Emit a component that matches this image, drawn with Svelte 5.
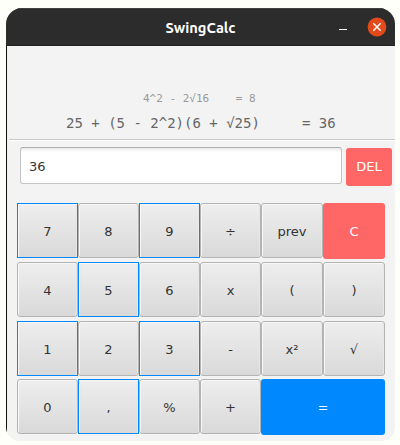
<script>
  const keys = [
    { t: '7', f: true }, { t: '8' }, { t: '9', f: true }, { t: '÷' }, { t: 'prev' }, { t: 'C', k: 'red' },
    { t: '4' }, { t: '5', f: true }, { t: '6' }, { t: 'x' }, { t: '(' }, { t: ')' },
    { t: '1', f: true }, { t: '2' }, { t: '3', f: true }, { t: '-' }, { t: 'x²' }, { t: '√' },
    { t: '0' }, { t: ',', f: true }, { t: '%' }, { t: '+' }, { t: '=', k: 'blue' }
  ];
</script>

<main>
  <div class="window">
    <header>
      <span class="side"></span>
      <h1>SwingCalc</h1>
      <div class="side controls">
        <i class="min"></i>
        <svg width="20" height="20" viewBox="0 0 20 20">
          <circle cx="10" cy="10" r="9.4" fill="#e2491b" />
          <path d="M6.3 6.3L13.7 13.7M13.7 6.3L6.3 13.7" stroke="#fff" stroke-width="1.5" fill="none" />
        </svg>
      </div>
    </header>
    <div class="body">
      <div class="history">
        <div class="old">4^2 - 2√16    = 8</div>
        <div class="last">25 + (5 - 2^2)(6 + √25)     = 36</div>
      </div>
      <div class="entry">
        <div class="field">36</div>
        <button class="del">DEL</button>
      </div>
      <div class="keys">
        {#each keys as key}
          <button class={['key', key.k, key.f && 'focus']}>{key.t}</button>
        {/each}
      </div>
    </div>
  </div>
</main>

<style>
  main {
    box-sizing: border-box;
    width: 400px;
    height: 445px;
    padding: 8px 5px 4px 6px;
    background: #fffffa;
    font-family: "DejaVu Sans", sans-serif;
    overflow: hidden;
  }
  .window {
    box-sizing: border-box;
    height: 433px;
    border-radius: 16px 16px 14px 14px;
    overflow: hidden;
    background: #f3f3f3;
  }
  header {
    box-sizing: border-box;
    height: 38px;
    display: flex;
    align-items: center;
    justify-content: space-between;
    background: #2c2c2c;
    border-top: 1px solid #40403c;
    border-bottom: 1px solid #222;
  }
  h1 {
    margin: 2px 0 0;
    font: bold 14.67px/20px Ubuntu, "Noto Sans", sans-serif;
    color: #fff;
  }
  .side {
    width: 100px;
  }
  .controls {
    display: flex;
    align-items: center;
    justify-content: flex-end;
    gap: 20px;
    padding-right: 8px;
    box-sizing: border-box;
  }
  .min {
    width: 8px;
    height: 1px;
    margin-top: 4px;
    background: #fff;
  }
  svg {
    display: block;
  }
  .body {
    box-sizing: border-box;
    height: 395px;
    border-left: 1px solid #111;
  }
  .history {
    box-sizing: border-box;
    height: 94px;
    margin-left: 2px;
    padding-top: 44px;
    border-bottom: 1px solid #c8c8c8;
    box-shadow: 0 1px #fff;
    font-family: "DejaVu Sans Mono", monospace;
  }
  .old,
  .last {
    white-space: pre;
  }
  .old {
    padding-left: 134px;
    font-size: 11px;
    line-height: 18px;
    color: #999;
  }
  .last {
    padding-left: 57px;
    margin-top: 5px;
    font-size: 14px;
    line-height: 20px;
    color: #666;
  }
  .entry {
    display: flex;
    gap: 4px;
    padding: 7px 3px 0 13px;
  }
  .field {
    box-sizing: border-box;
    width: 322px;
    height: 37px;
    padding-left: 8px;
    border: 1px solid #c4c4c4;
    border-top-color: #adb0b0;
    border-radius: 3px;
    background: linear-gradient(#e9e9e9, #fff 4px);
    font-size: 13px;
    line-height: 37px;
    color: #333;
  }
  button {
    box-sizing: border-box;
    margin: 0;
    padding: 0;
    border: 0;
    font: 13px/20px "DejaVu Sans", sans-serif;
    color: #333;
  }
  .del {
    width: 46px;
    height: 38px;
    margin-top: 1px;
    border-radius: 3px;
    background: #f66;
    color: #fff;
  }
  .keys {
    display: grid;
    grid-template-columns: 61px 61px 61px 61px 62px 62px;
    grid-template-rows: 59px 59px 58px 56px;
    padding: 17px 0 0 10px;
  }
  .key {
    height: 55px;
    padding-top: 2px;
    border: 1px solid #b3b3b3;
    border-radius: 3px;
    background: linear-gradient(#eee, #d9d9d9);
    box-shadow: inset 1px 1px #f8f8f8, inset -1px 0 #e8e8e8;
  }
  .focus {
    border-color: #08f;
    border-radius: 0;
  }
  .red,
  .blue {
    height: 56px;
    border: 0;
    box-shadow: none;
    color: #fff;
    background: #f66;
  }
  .blue {
    grid-column: span 2;
    background: #08f;
  }
</style>
